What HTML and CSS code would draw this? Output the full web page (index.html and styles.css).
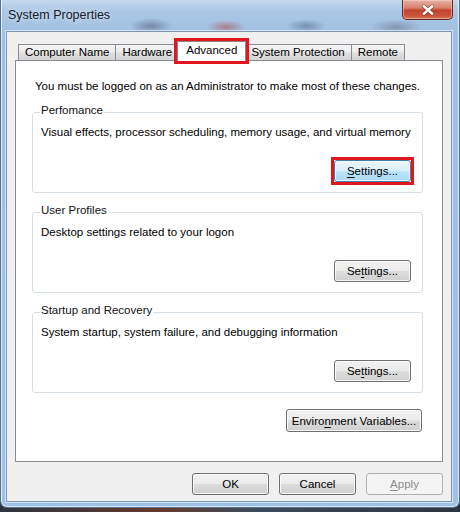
FILE: index.html
```html
<!DOCTYPE html>
<html lang="en">
<head>
<meta charset="utf-8">
<title>System Properties</title>
<link rel="stylesheet" href="styles.css">
</head>
<body>
<div class="window">
  <div class="titlebar">
    <span class="title">System Properties</span>
    <button class="close" aria-label="Close">
      <svg width="14" height="12" viewBox="-7 -6 14 12">
        <path d="M-4 -3.5 L4 3.5 M4 -3.5 L-4 3.5" stroke="#5a2a26" stroke-width="4" stroke-linecap="round" opacity="0.55"/>
        <path d="M-4 -3.5 L4 3.5 M4 -3.5 L-4 3.5" stroke="#ffffff" stroke-width="2.4" stroke-linecap="square"/>
      </svg>
    </button>
  </div>
  <div class="client">
    <div class="tabstrip">
      <div class="tab first">Computer Name</div>
      <div class="tab">Hardware</div>
      <div class="tab selected marked">Advanced</div>
      <div class="tab">System Protection</div>
      <div class="tab">Remote</div>
    </div>
    <div class="panel">
      <p class="intro">You must be logged on as an Administrator to make most of these changes.</p>
      <fieldset class="group">
        <legend>Perfomance</legend>
        <p class="desc">Visual effects, processor scheduling, memory usage, and virtual memory</p>
        <div class="actions"><span class="marker"><button class="btn settings hot"><u>S</u>ettings...</button></span></div>
      </fieldset>
      <fieldset class="group">
        <legend>User Profiles</legend>
        <p class="desc">Desktop settings related to your logon</p>
        <div class="actions"><button class="btn settings">Se<u>t</u>tings...</button></div>
      </fieldset>
      <fieldset class="group">
        <legend>Startup and Recovery</legend>
        <p class="desc">System startup, system failure, and debugging information</p>
        <div class="actions"><button class="btn settings">Se<u>t</u>tings...</button></div>
      </fieldset>
      <div class="actions env-row"><button class="btn env">Enviro<u>n</u>ment Variables...</button></div>
    </div>
    <div class="dialog-buttons">
      <button class="btn dlg">OK</button>
      <button class="btn dlg">Cancel</button>
      <button class="btn dlg disabled"><u>A</u>pply</button>
    </div>
  </div>
</div>
</body>
</html>
```

FILE: styles.css
```css
* { box-sizing: border-box; }
html, body { margin: 0; padding: 0; }
body {
  width: 460px;
  height: 512px;
  overflow: hidden;
  background: linear-gradient(to right, #2c3440 0%, #6a3a2c 35%, #3c4c60 55%, #2c3440 100%);
  font-family: "Liberation Sans", Arial, sans-serif;
  font-size: 11.5px;
  color: #000;
}

.window {
  width: 460px;
  height: 508px;
  display: flex;
  flex-direction: column;
  border: 1px solid #56708f;
  border-top: none;
  border-radius: 0 0 7px 7px;
  background:
    radial-gradient(ellipse 22px 8px at 150px 26px, rgba(60,70,90,.45), transparent),
    radial-gradient(ellipse 20px 7px at 225px 27px, rgba(170,50,40,.45), transparent),
    radial-gradient(ellipse 20px 7px at 305px 26px, rgba(50,70,100,.4), transparent),
    radial-gradient(ellipse 26px 8px at 395px 27px, rgba(70,70,80,.35), transparent),
    linear-gradient(to bottom, #c3d8ee 0px, #a9c6e4 12px, #9fc0e3 40px, #9fc2e6 100%);
  box-shadow: inset 1px 0 0 rgba(255,255,255,.7), inset -1px 0 0 rgba(255,255,255,.6), inset 0 -1px 0 rgba(255,255,255,.6);
}

.titlebar {
  height: 31px;
  flex: none;
  display: flex;
  justify-content: space-between;
  align-items: flex-start;
  padding-left: 7px;
}
.title {
  font-size: 12.5px;
  line-height: 16px;
  margin-top: 7px;
  color: #14202e;
  text-shadow: 0 0 6px rgba(255,255,255,.9);
}
.close {
  width: 51px;
  height: 20px;
  margin-right: 6px;
  padding: 0;
  border: 1px solid #6b2a22;
  border-top: none;
  border-radius: 0 0 5px 5px;
  background: linear-gradient(to bottom, #e8b2a6 0%, #d7846f 40%, #c4432f 55%, #c9553c 85%, #d77e5f 100%);
  box-shadow: inset 0 0 0 1px rgba(255,220,210,.45);
  display: flex;
  align-items: center;
  justify-content: center;
}
.close svg { display: block; margin-top: 1px; }

.client {
  height: 471px;
  flex: none;
  margin: 0 7px 0 5px;
  background: #f0f0f0;
  border: 1px solid #7d97b4;
  box-shadow: 0 0 0 1px rgba(255,255,255,.55);
  padding: 9px 8px 0 8px;
  display: flex;
  flex-direction: column;
}

.tabstrip {
  height: 19px;
  display: flex;
  align-items: flex-end;
  padding-left: 3px;
}
.tab {
  height: 16px;
  line-height: 15px;
  padding: 0 6px;
  border: 1px solid #898c95;
  border-bottom: none;
  margin-left: -1px;
  background: linear-gradient(to bottom, #f5f5f5 0%, #ececec 45%, #dedede 55%, #d4d4d4 100%);
  white-space: nowrap;
}
.tab.first { margin-left: 0; }
.tab.selected {
  position: relative;
  z-index: 3;
  height: 20px;
  line-height: 17px;
  margin: 0 -2px -1px -2px;
  padding: 0 8px;
  background: #fff;
}
.tab.selected + .tab { margin-left: 0; }
.tab.marked {
  outline: 3px solid #e4161d;
  outline-offset: 0;
}

.panel {
  height: 402px;
  flex: none;
  position: relative;
  z-index: 1;
  background: #fff;
  border: 1px solid #898c95;
  padding: 18px 19px 0 16px;
}

.intro {
  margin: 0 0 0 3px;
  line-height: 14px;
  white-space: nowrap;
}

.group {
  margin: 10px 0 0 0;
  min-width: 0;
  padding: 0 11px 10px 8px;
  border: 1px solid #d5dfe5;
  border-radius: 3px;
}
.group legend {
  padding: 0 1px 4px 1px;
  margin-left: -1px;
  line-height: 14px;
  color: #111;
}
.desc {
  margin: 4px 0 0 0;
  line-height: 14px;
  white-space: nowrap;
}
.actions {
  display: flex;
  justify-content: flex-end;
  margin-top: 21px;
}
.env-row {
  margin-top: 16px;
  padding-right: 1px;
}

.marker {
  display: flex;
  outline: 3px solid #e4161d;
  outline-offset: 0;
}

.btn {
  height: 22px;
  padding: 0;
  border: 1px solid #707070;
  border-radius: 3px;
  background: linear-gradient(to bottom, #f2f2f2 0%, #ebebeb 48%, #dddddd 52%, #cfcfcf 100%);
  box-shadow: inset 0 0 0 1px rgba(255,255,255,.8);
  font-family: "Liberation Sans", Arial, sans-serif;
  font-size: 11.5px;
  color: #000;
  line-height: 18px;
}
.btn u { text-decoration-thickness: 1px; text-underline-offset: 2px; }
.btn.settings { width: 77px; }
.btn.env { width: 136px; height: 23px; }
.btn.hot {
  border-color: #3c7fb1;
  background: linear-gradient(to bottom, #eaf6fd 0%, #d9f0fc 48%, #bee6fd 52%, #a7d9f5 100%);
}

.dialog-buttons {
  display: flex;
  justify-content: flex-end;
  gap: 10px;
  margin-top: 11px;
}
.btn.dlg { width: 77px; }
.btn.dlg.disabled {
  border-color: #adb2b5;
  background: #f4f4f4;
  color: #8a8a8a;
  box-shadow: none;
}
```
